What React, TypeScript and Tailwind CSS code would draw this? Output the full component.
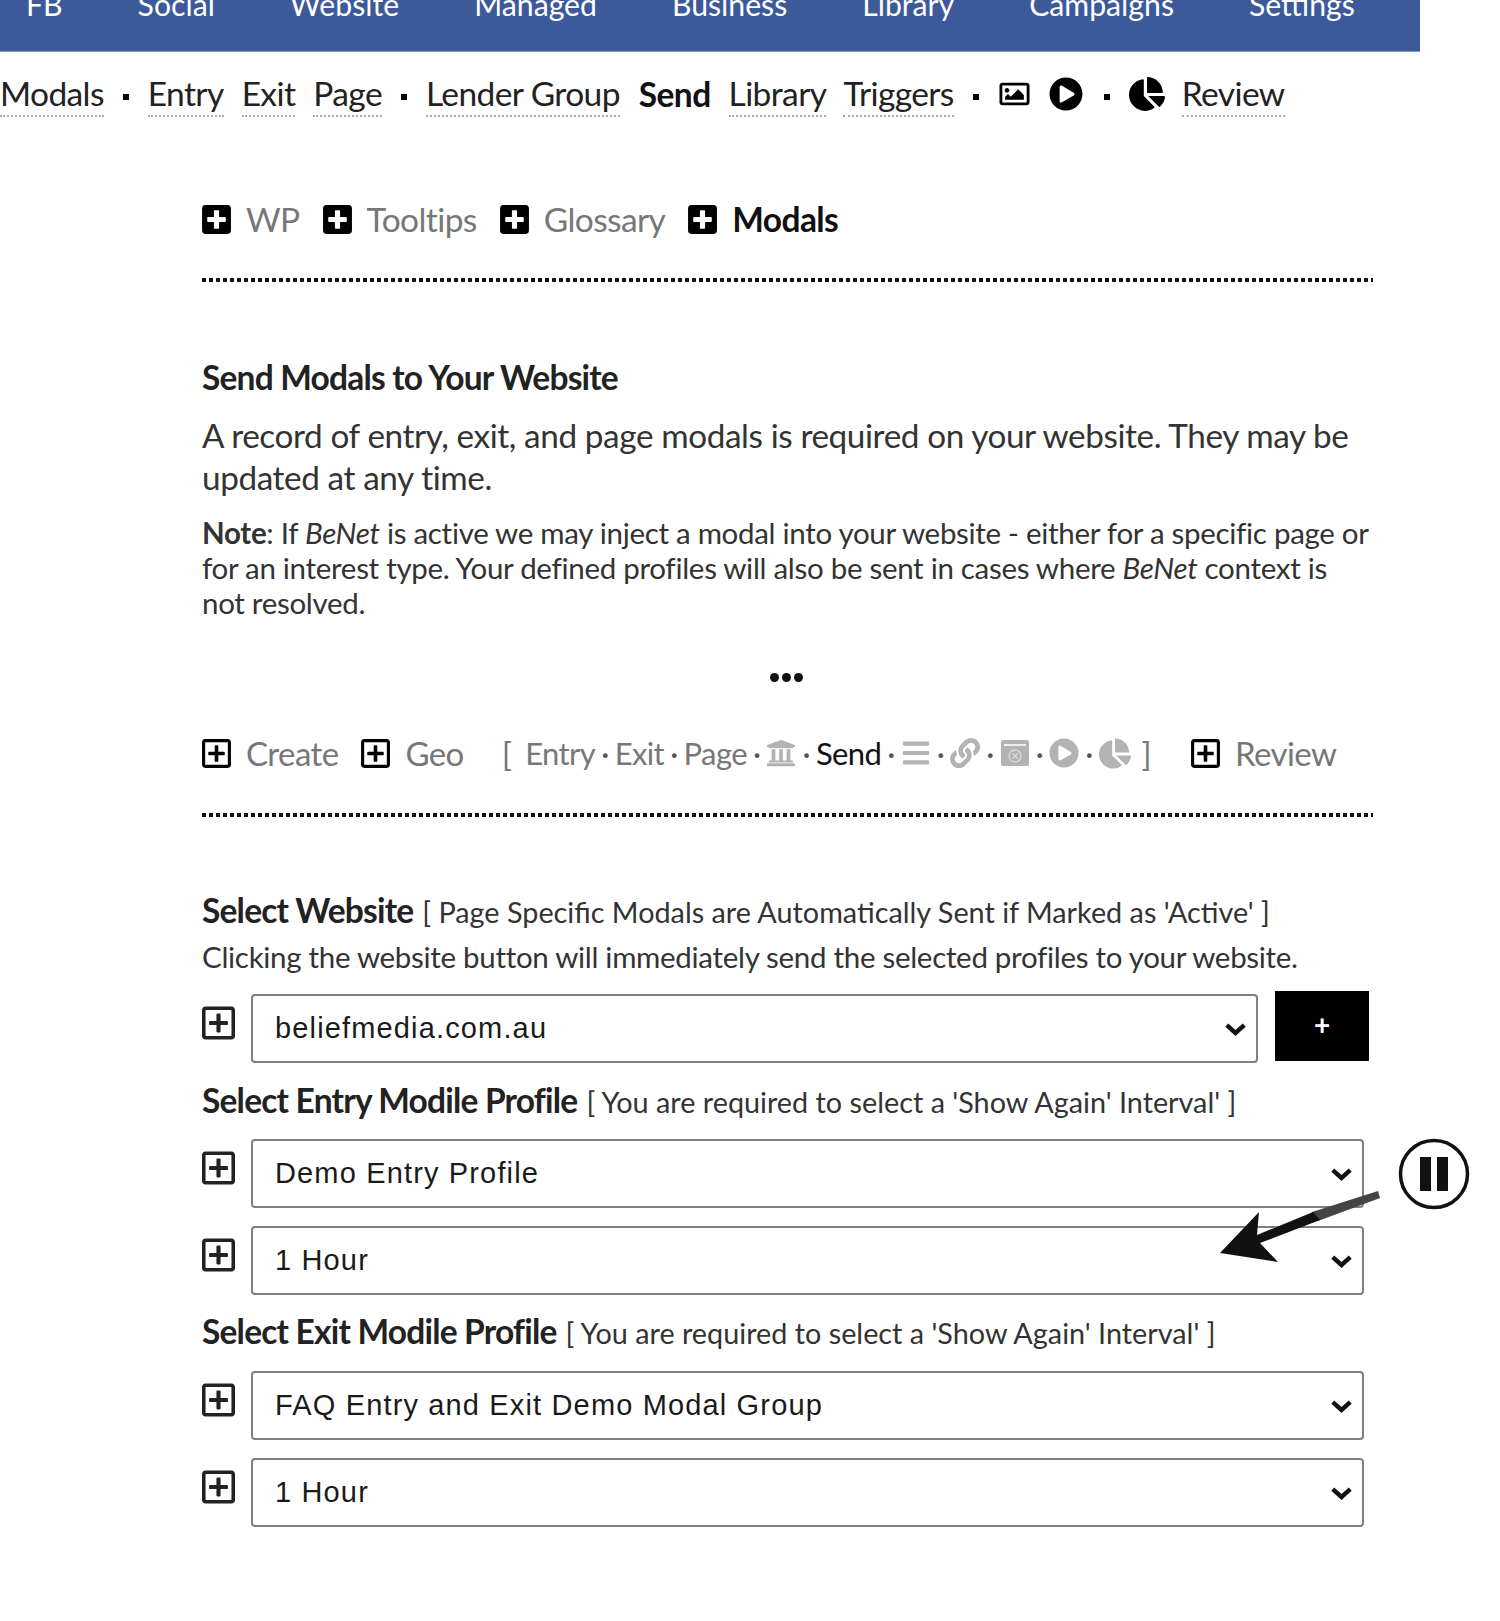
import {
  FaPlusSquare,
  FaRegPlusSquare,
  FaRegImage,
  FaPlayCircle,
  FaChartPie,
  FaUniversity,
  FaBars,
  FaLink,
} from "react-icons/fa";

const topNav = ["FB", "Social", "Website", "Managed", "Business", "Library", "Campaigns", "Settings"];

function NavLink({ children }: { children: React.ReactNode }) {
  return (
    <span className="border-b-2 border-dotted border-[#aaa] pb-[7px] leading-[30px] text-[#222]">
      {children}
    </span>
  );
}

function Dot() {
  return <span className="mx-[19px] inline-block h-[6px] w-[6px] bg-black" />;
}

function TabLabel({ icon, label, active }: { icon: React.ReactNode; label: string; active?: boolean }) {
  return (
    <span className="flex items-center gap-[15px]">
      {icon}
      <span className={active ? "font-bold text-[#111]" : "text-[#777]"}>{label}</span>
    </span>
  );
}

function SmallDot() {
  return <span className="mx-[6px] text-[#555]">·</span>;
}

function DottedRule({ className }: { className: string }) {
  return (
    <div className={`h-[4px] bg-[repeating-linear-gradient(90deg,#111_0_4px,transparent_4px_7px)] ${className}`} />
  );
}

function SelectRow({ value, wide = true, children }: { value: string; wide?: boolean; children?: React.ReactNode }) {
  return (
    <div className="flex items-start">
      <FaRegPlusSquare className="mt-[10px] h-[38px] w-[33px] shrink-0 text-[#222]" />
      <div className="relative ml-[16px]">
        <select
          defaultValue={value}
          className={`block h-[69px] appearance-none rounded-[4px] border-2 border-[#808080] bg-white pl-[22px] text-[29px] tracking-[1.15px] text-[#1a1a1a] ${
            wide ? "w-[1113px]" : "w-[1007px]"
          }`}
          style={{ fontFamily: "'Liberation Sans', sans-serif" }}
        >
          <option>{value}</option>
        </select>
        <svg viewBox="0 0 24 14" className="pointer-events-none absolute right-[12px] top-[29px] h-[13px] w-[21px]">
          <path d="M2 2l10 9 10-9" fill="none" stroke="#111" strokeWidth="5" />
        </svg>
      </div>
      {children}
    </div>
  );
}

function SectionLabel({ title, note }: { title: string; note: string }) {
  return (
    <div className="leading-[36px]">
      <span className="text-[33.5px] font-bold tracking-[-0.8px] text-[#222]">{title}</span>
      <span className="ml-[9px] text-[28.8px] text-[#333]">[ {note} ]</span>
    </div>
  );
}

// grey window icon from the step list
function WindowIcon() {
  return (
    <svg viewBox="0 0 30 30" className="h-[30px] w-[30px]">
      <rect x="1" y="2" width="28" height="26" rx="2" fill="#b3b3b3" />
      <rect x="4" y="6" width="22" height="2" fill="#eee" />
      <circle cx="15" cy="18" r="6" fill="none" stroke="#d8d8d8" strokeWidth="1.5" />
      <path d="M12.5 15.5l5 5M17.5 15.5l-5 5" stroke="#d8d8d8" strokeWidth="1.5" />
    </svg>
  );
}

export default function App() {
  return (
    <div className="relative h-[1621px] w-[1500px] overflow-hidden bg-white" style={{ fontFamily: "Lato, sans-serif" }}>
      <header className="h-[52px] w-[1420px] overflow-hidden border-b border-[#7f9cc9] bg-[#3c5a99]">
        <nav className="-mt-[14px] flex gap-[75px] pl-[26px] text-[30.2px] leading-[36px] text-white">
          {topNav.map((item) => (
            <span key={item}>{item}</span>
          ))}
        </nav>
      </header>

      <div className="mt-[23px] flex items-center text-[33.5px] tracking-[-0.6px]">
        <NavLink>Modals</NavLink>
        <Dot />
        <NavLink>Entry</NavLink>
        <span className="w-[18px]" />
        <NavLink>Exit</NavLink>
        <span className="w-[18px]" />
        <NavLink>Page</NavLink>
        <Dot />
        <NavLink>Lender Group</NavLink>
        <span className="ml-[19px] mr-[18px] -mt-[6px] font-bold text-[#111]">Send</span>
        <NavLink>Library</NavLink>
        <span className="w-[17px]" />
        <NavLink>Triggers</NavLink>
        <Dot />
        <FaRegImage className="-mt-[6px] h-[30px] w-[33px] text-black" />
        <span className="w-[18px]" />
        <FaPlayCircle className="-mt-[6px] h-[34px] w-[34px] text-black" />
        <span className="w-[2px]" />
        <Dot />
        <FaChartPie className="-mt-[6px] h-[34px] w-[36px] text-black" />
        <span className="w-[17px]" />
        <NavLink>Review</NavLink>
      </div>

      <main className="ml-[202px] w-[1171px]">
        <div className="mt-[80px] flex items-center gap-[23px] text-[33.5px] leading-[40px] tracking-[-0.6px]">
          <TabLabel icon={<FaPlusSquare className="h-[33px] w-[29px] text-black" />} label="WP" />
          <TabLabel icon={<FaPlusSquare className="h-[33px] w-[29px] text-black" />} label="Tooltips" />
          <TabLabel icon={<FaPlusSquare className="h-[33px] w-[29px] text-black" />} label="Glossary" />
          <TabLabel icon={<FaPlusSquare className="h-[33px] w-[29px] text-black" />} label="Modals" active />
        </div>
        <DottedRule className="mt-[39px]" />

        <h2 className="mt-[75px] text-[33.5px] font-bold leading-[40px] tracking-[-0.8px] text-[#222]">
          Send Modals to Your Website
        </h2>
        <p className="mt-[17px] text-[33.3px] leading-[42px] tracking-[-0.4px] text-[#333]">
          A record of entry, exit, and page modals is required on your website. They may be updated at any time.
        </p>
        <p className="mt-[17px] text-[29.5px] leading-[35px] tracking-[-0.3px] text-[#333]">
          <b>Note</b>: If <i>BeNet</i> is active we may inject a modal into your website - either for a specific page
          or for an interest type. Your defined profiles will also be sent in cases where <i>BeNet</i> context is not
          resolved.
        </p>

        <div className="mt-[53px] flex justify-center gap-[3px] pr-[2px]">
          <span className="h-[9px] w-[9px] rounded-full bg-[#111]" />
          <span className="h-[9px] w-[9px] rounded-full bg-[#111]" />
          <span className="h-[9px] w-[9px] rounded-full bg-[#111]" />
        </div>

        <div className="mt-[51px] flex items-center text-[33px] leading-[40px] tracking-[-0.6px]">
          <TabLabel icon={<FaRegPlusSquare className="h-[33px] w-[29px] text-black" />} label="Create" />
          <span className="w-[23px]" />
          <TabLabel icon={<FaRegPlusSquare className="h-[33px] w-[29px] text-black" />} label="Geo" />
          <span className="ml-[38px] flex items-center text-[31px] text-[#777]">
            <span className="mr-[14px] text-[33px]">[</span>
            Entry
            <SmallDot />
            Exit
            <SmallDot />
            Page
            <SmallDot />
            <FaUniversity className="h-[30px] w-[30px] text-[#b3b3b3]" />
            <SmallDot />
            <span className="text-[#111]">Send</span>
            <SmallDot />
            <FaBars className="h-[30px] w-[30px] text-[#b3b3b3]" />
            <SmallDot />
            <FaLink className="h-[30px] w-[30px] text-[#b3b3b3]" />
            <SmallDot />
            <WindowIcon />
            <SmallDot />
            <FaPlayCircle className="h-[30px] w-[30px] text-[#b3b3b3]" />
            <SmallDot />
            <FaChartPie className="h-[31px] w-[32px] text-[#b3b3b3]" />
            <span className="ml-[11px] text-[33px]">]</span>
          </span>
          <span className="w-[40px]" />
          <TabLabel icon={<FaRegPlusSquare className="h-[33px] w-[29px] text-black" />} label="Review" />
        </div>
        <DottedRule className="mt-[40px]" />

        <div className="mt-[75px]">
          <SectionLabel title="Select Website" note="Page Specific Modals are Automatically Sent if Marked as 'Active'" />
        </div>
        <p className="mt-[4px] text-[29.5px] leading-[36px] tracking-[-0.3px] text-[#333]">
          Clicking the website button will immediately send the selected profiles to your website.
        </p>

        <div className="mt-[19px]">
          <SelectRow value="beliefmedia.com.au" wide={false}>
            <button className="-mt-[3px] ml-[17px] h-[70px] w-[94px] bg-black pb-[4px] text-[28px] font-bold text-white">+</button>
          </SelectRow>
        </div>

        <div className="mt-[19px]">
          <SectionLabel title="Select Entry Modile Profile" note="You are required to select a 'Show Again' Interval'" />
        </div>
        <div className="mt-[14px] flex flex-col gap-[18px]">
          <SelectRow value="Demo Entry Profile" />
          <SelectRow value="1 Hour" />
        </div>

        <div className="mt-[18px]">
          <SectionLabel title="Select Exit Modile Profile" note="You are required to select a 'Show Again' Interval'" />
        </div>
        <div className="mt-[15px] flex flex-col gap-[18px]">
          <SelectRow value="FAQ Entry and Exit Demo Modal Group" />
          <SelectRow value="1 Hour" />
        </div>
      </main>

      {/* pause badge and arrow sit on top of the form */}
      <svg viewBox="0 0 72 72" className="absolute left-[1398px] top-[1138px] h-[72px] w-[72px]">
        <circle cx="36" cy="36" r="33.5" fill="none" stroke="#111" strokeWidth="3.5" />
        <rect x="22" y="19" width="11" height="34" fill="#111" />
        <rect x="39" y="19" width="11" height="34" fill="#111" />
      </svg>
      <svg viewBox="0 0 170 80" className="absolute left-[1218px] top-[1190px] h-[80px] w-[170px]">
        <path d="M160 1 L162 8 L100 31 L94 22 Z" fill="#444" />
        <path d="M102 30 L42 53 L60 72 L2 63 L41 22 L39 45 L95 22 Z" fill="#111" />
      </svg>
    </div>
  );
}
